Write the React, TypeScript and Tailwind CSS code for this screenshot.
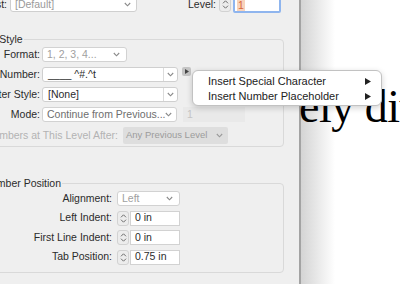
import React from "react";

function Chevron({ color = "#8a8a8a" }: { color?: string }) {
  return (
    <svg width="7" height="5" viewBox="0 0 7 5" className="shrink-0">
      <path d="M0.8 1 L3.5 3.8 L6.2 1" fill="none" stroke={color} strokeWidth="1.1" />
    </svg>
  );
}

function Stepper() {
  return (
    <div className="w-[12px] h-[15px] shrink-0 rounded-[3px] border border-[#d2d2d2] bg-[#ececec] flex flex-col items-center justify-center gap-[1px]">
      <svg width="7" height="4" viewBox="0 0 7 4">
        <path d="M1 3.3 L3.5 0.8 L6 3.3" fill="none" stroke="#6d6d6d" strokeWidth="1" />
      </svg>
      <svg width="7" height="4" viewBox="0 0 7 4">
        <path d="M1 0.7 L3.5 3.2 L6 0.7" fill="none" stroke="#6d6d6d" strokeWidth="1" />
      </svg>
    </div>
  );
}

function Label({ children, cls }: { children: React.ReactNode; cls: string }) {
  return (
    <div className={`flex justify-end whitespace-nowrap shrink-0 ${cls}`}>
      <span>{children}</span>
    </div>
  );
}

export default function App() {
  return (
    <div
      className="w-[400px] h-[284px] overflow-hidden flex relative bg-white text-[10.5px] text-[#2b2b2b]"
      style={{ fontFamily: '"Liberation Sans", Arial, sans-serif' }}
    >
      {/* Dialog */}
      <div className="w-[301px] h-full shrink-0 bg-[#efefef] border-r-2 border-[#a3a3a3] flex flex-col">
        {/* top row */}
        <div className="flex items-center h-[15px] mt-[-3px]">
          <Label cls="w-[8px] -ml-[1px]">List:</Label>
          <div className="ml-[3px] w-[127px] h-[15px] bg-white border border-[#cfcfcf] rounded-[3px] flex items-center justify-between pl-[4px] pr-[5px]">
            <span className="text-[#9a9a9a]">[Default]</span>
            <Chevron />
          </div>
          <Label cls="w-[79px]">Level:</Label>
          <div className="ml-[3px]">
            <Stepper />
          </div>
          <div className="ml-[2px] w-[48px] h-[16px] bg-white border-2 border-[#8fb5ee] rounded-[2px] flex items-center pl-[2px]">
            <span className="bg-[#f8d3bb] text-[#d8663a] px-[1px] leading-[12px]">1</span>
          </div>
        </div>

        {/* Numbering Style */}
        <fieldset className="mt-[21px] ml-[-62px] w-[346px] shrink-0 border border-[#d9d9d9] rounded-[4px] pb-[2px]">
          <legend className="ml-[5px] px-[1px] leading-[13px] whitespace-nowrap">Numbering Style</legend>
          <div className="flex flex-col gap-[5px] mt-[1px]">
            <div className="flex items-center h-[15px]">
              <Label cls="w-[101px]">Format:</Label>
              <div className="ml-[2px] w-[85px] h-[15px] bg-white border border-[#d2d2d2] rounded-[3px] flex items-center justify-between pl-[4px] pr-[6px]">
                <span className="text-[#a0a0a0] whitespace-nowrap">1, 2, 3, 4...</span>
                <Chevron />
              </div>
            </div>
            <div className="flex items-start h-[15px]">
              <Label cls="w-[101px] h-[15px] items-center">Number:</Label>
              <div className="ml-[2px] w-[136px] h-[15px] bg-white border border-[#cfcfcf] rounded-[3px] flex items-center">
                <span className="flex-1 pl-[5px] whitespace-pre">____ ^#.^t</span>
                <div className="w-[14px] h-full border-l border-[#dcdcdc] flex items-center justify-center">
                  <Chevron />
                </div>
              </div>
              <div className="ml-[4px] w-[9px] h-[9px] bg-[#c4c4c4] rounded-[2px] flex items-center justify-center">
                <svg width="4" height="5" viewBox="0 0 4 5">
                  <path d="M0 0 L4 2.5 L0 5 Z" fill="#444" />
                </svg>
              </div>
            </div>
            <div className="flex items-center h-[15px]">
              <Label cls="w-[101px]">Character Style:</Label>
              <div className="ml-[2px] w-[136px] h-[15px] bg-white border border-[#cfcfcf] rounded-[3px] flex items-center">
                <span className="flex-1 pl-[5px]">[None]</span>
                <div className="w-[14px] h-full border-l border-[#dcdcdc] flex items-center justify-center">
                  <Chevron />
                </div>
              </div>
            </div>
            <div className="flex items-center h-[15px]">
              <Label cls="w-[101px]">Mode:</Label>
              <div className="ml-[2px] w-[135px] h-[15px] bg-white border border-[#d2d2d2] rounded-[3px] flex items-center justify-between pl-[4px] pr-[6px] overflow-hidden">
                <span className="text-[#6e6e6e] whitespace-nowrap">Continue from Previous...</span>
                <Chevron />
              </div>
              <div className="ml-[6px] w-[62px] h-[15px] bg-[#e9e9e9] flex items-center pl-[4px]">
                <span className="text-[#c4c4c4]">1</span>
              </div>
            </div>
            <div className="flex items-center h-[17px]">
              <Label cls="w-[179px] text-[#b3b3b3]">Restart Numbers at This Level After:</Label>
              <div className="ml-[5px] w-[105px] h-[17px] bg-[#dedede] rounded-[2px] flex items-center justify-between pl-[3px] pr-[5px] overflow-hidden">
                <span className="text-[#9c9c9c] whitespace-nowrap text-[9.5px]">Any Previous Level</span>
                <Chevron color="#9a9a9a" />
              </div>
            </div>
          </div>
        </fieldset>

        {/* Bullet or Number Position */}
        <fieldset className="mt-[30px] ml-[-62px] w-[346px] shrink-0 border border-[#d9d9d9] rounded-[4px] pb-[7px]">
          <legend className="ml-[2px] px-[1px] leading-[13px] whitespace-nowrap">Bullet or Number Position</legend>
          <div className="flex flex-col gap-[4.5px] mt-[1px]">
            <div className="flex items-center h-[15px]">
              <Label cls="w-[173px]">Alignment:</Label>
              <div className="ml-[5px] w-[63px] h-[15px] bg-white border border-[#d2d2d2] rounded-[3px] flex items-center justify-between pl-[4px] pr-[6px]">
                <span className="text-[#a0a0a0]">Left</span>
                <Chevron />
              </div>
            </div>
            {[
              ["Left Indent:", "0 in"],
              ["First Line Indent:", "0 in"],
              ["Tab Position:", "0.75 in"],
            ].map(([l, v]) => (
              <div key={l} className="flex items-center h-[15px]">
                <Label cls="w-[173px]">{l}</Label>
                <div className="ml-[5px]">
                  <Stepper />
                </div>
                <div className="ml-[1px] w-[50px] h-[15px] bg-white border border-[#d2d2d2] flex items-center pl-[4px]">
                  <span className="whitespace-nowrap">{v}</span>
                </div>
              </div>
            ))}
          </div>
        </fieldset>
      </div>

      {/* Document page */}
      <div className="flex-1 relative bg-white">
        <div className="absolute inset-y-0 left-0 w-[34px] bg-gradient-to-r from-[#d4d4d4] to-white" />
        <div
          className="absolute left-[-2px] top-[84px] text-[46px] leading-none text-black whitespace-nowrap tracking-[-0.5px]"
          style={{ fontFamily: '"Liberation Serif", "Times New Roman", serif' }}
        >
          ely divided
        </div>
      </div>

      {/* Popup menu */}
      <div className="absolute left-[192px] top-[70px] w-[190px] h-[36px] bg-white border border-[#c2c2c2] rounded-[6px] shadow-[0_2px_6px_rgba(0,0,0,0.18)] pt-[3px] text-[11px] text-[#222]">
        {["Insert Special Character", "Insert Number Placeholder"].map((t) => (
          <div key={t} className="h-[15px] flex items-center justify-between pl-[15px] pr-[10px]">
            <span>{t}</span>
            <svg width="6" height="7" viewBox="0 0 6 7">
              <path d="M0 0 L6 3.5 L0 7 Z" fill="#222" />
            </svg>
          </div>
        ))}
      </div>
    </div>
  );
}
